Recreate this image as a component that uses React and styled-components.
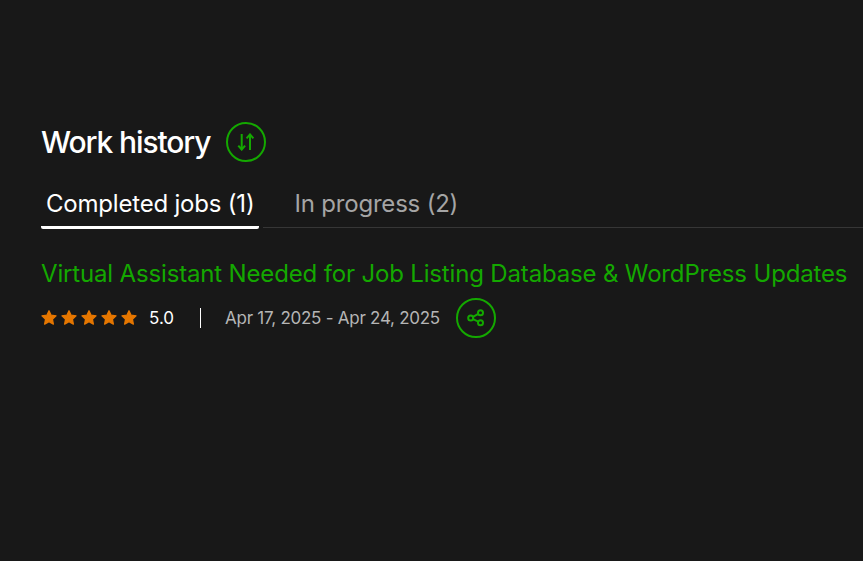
import React from "react";
import styled, { createGlobalStyle } from "styled-components";

const GlobalStyle = createGlobalStyle`
  html, body {
    margin: 0;
    height: 100%;
    background: #181818;
  }
  body {
    font-family: Inter, "Liberation Sans", sans-serif;
    overflow: hidden;
  }
`;

const Page = styled.div`
  height: 561px;
  padding: 122px 0 0 41px;
  box-sizing: border-box;
  background: #181818;
`;

const Header = styled.div`
  display: flex;
  align-items: center;
  gap: 16px;
  height: 40px;
`;

const Title = styled.h2`
  margin: 0;
  font-size: 30px;
  font-weight: 500;
  letter-spacing: -1.1px;
  color: #fff;
`;

const CircleButton = styled.button`
  width: 40px;
  height: 40px;
  flex: none;
  padding: 0;
  display: flex;
  align-items: center;
  justify-content: center;
  border: 2px solid #14a800;
  border-radius: 50%;
  background: transparent;
  color: #14a800;
`;

const Tabs = styled.div`
  display: flex;
  gap: 31px;
  margin-top: 19px;
  background: linear-gradient(#363636, #363636) no-repeat 222px 46px / 100% 1px;
`;

const Tab = styled.div`
  padding: 0 4px 0 5px;
  height: 48px;
  box-sizing: border-box;
  line-height: 45px;
  font-size: 24px;
  letter-spacing: -0.2px;
  color: ${(p) => (p.$active ? "#fff" : "#a5a5a5")};
  border-bottom: 3px solid ${(p) => (p.$active ? "#fff" : "transparent")};
  border-radius: 0 0 2px 2px;
`;

const JobTitle = styled.a`
  display: block;
  margin-top: 29px;
  font-size: 24px;
  line-height: 32px;
  letter-spacing: -0.16px;
  color: #14a800;
  white-space: nowrap;
`;

const Meta = styled.div`
  display: flex;
  align-items: center;
  margin-top: 8px;
  height: 40px;
`;

const Stars = styled.div`
  display: flex;
  gap: 4px;
`;

const Rating = styled.span`
  margin-left: 12px;
  font-size: 17px;
  color: #fff;
`;

const Divider = styled.span`
  width: 1px;
  height: 20px;
  margin: 0 24px 0 26px;
  background: #fff;
`;

const Dates = styled.span`
  margin-right: 16px;
  font-size: 17px;
  letter-spacing: -0.26px;
  color: #b5b5b5;
`;

const Star = () => (
  <svg width="16" height="16" viewBox="0.5 0.5 15 15">
    <path
      fill="#e67700"
      stroke="#e67700"
      strokeWidth="1.2"
      strokeLinejoin="round"
      d="M8 1.2l2 4.2 4.6.6-3.4 3.1.9 4.6L8 11.5l-4.1 2.2.9-4.6L1.4 6 6 5.4z"
    />
  </svg>
);

export default function App() {
  return (
    <>
      <GlobalStyle />
      <Page>
        <Header>
          <Title>Work history</Title>
          <CircleButton aria-label="Sort">
            <svg width="18" height="18" viewBox="0 0 18 18" fill="none" stroke="currentColor" strokeWidth="2">
              <path d="M4.7 1v15.5M1.3 12.6l3.4 4 3.4-4" />
              <path d="M13 17V1.5M9.6 5.4l3.4-4 3.4 4" />
            </svg>
          </CircleButton>
        </Header>
        <Tabs>
          <Tab $active>Completed jobs (1)</Tab>
          <Tab>In progress (2)</Tab>
        </Tabs>
        <JobTitle>Virtual Assistant Needed for Job Listing Database &amp; WordPress Updates</JobTitle>
        <Meta>
          <Stars>
            {[0, 1, 2, 3, 4].map((i) => (
              <Star key={i} />
            ))}
          </Stars>
          <Rating>5.0</Rating>
          <Divider />
          <Dates>Apr 17, 2025 - Apr 24, 2025</Dates>
          <CircleButton aria-label="Share">
            <svg width="20" height="20" viewBox="0 0 20 20" fill="none" stroke="currentColor" strokeWidth="2">
              <circle cx="14.5" cy="4.7" r="2.5" />
              <circle cx="4.7" cy="10" r="2.5" />
              <circle cx="14.5" cy="14.7" r="2.5" />
              <path d="M7 8.8l5.3-2.9M7 11.2l5.3 2.4" />
            </svg>
          </CircleButton>
        </Meta>
      </Page>
    </>
  );
}
